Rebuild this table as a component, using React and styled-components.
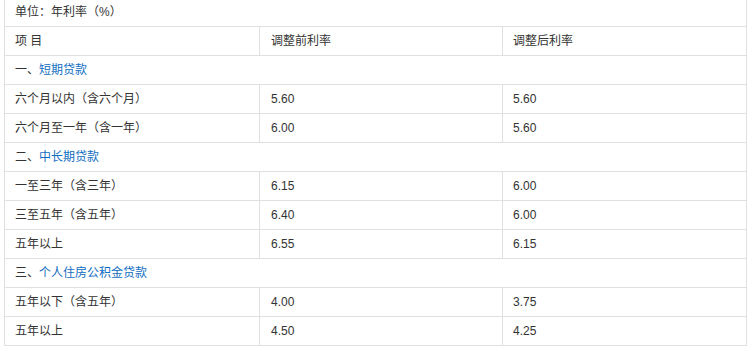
import React from "react";
import styled, { createGlobalStyle } from "styled-components";

const Global = createGlobalStyle`
  html, body { margin: 0; padding: 0; background: #fff; }
  body { font-family: "Liberation Sans", "Noto Sans CJK SC", sans-serif; }
`;

const Page = styled.div`
  padding: 0 9px 0 4px;
  overflow: hidden;
  height: 351px;
`;

const Table = styled.table`
  width: 742px;
  margin-top: -3px;
  border-collapse: collapse;
  table-layout: fixed;
  font-size: 12px;
  color: #333;
`;

const Cell = styled.td`
  border: 1px solid #e0e0e0;
  height: 28px;
  padding: 0 0 0 ${(p) => p.$pad || 10}px;
  vertical-align: middle;
  white-space: nowrap;
  line-height: 16px;
`;

const Link = styled.a`
  color: #136ec2;
  text-decoration: none;
`;

const rows = [
  { section: "一、", name: "短期贷款" },
  ["六个月以内（含六个月）", "5.60", "5.60"],
  ["六个月至一年（含一年）", "6.00", "5.60"],
  { section: "二、", name: "中长期贷款" },
  ["一至三年（含三年）", "6.15", "6.00"],
  ["三至五年（含五年）", "6.40", "6.00"],
  ["五年以上", "6.55", "6.15"],
  { section: "三、", name: "个人住房公积金贷款" },
  ["五年以下（含五年）", "4.00", "3.75"],
  ["五年以上", "4.50", "4.25"],
];

export default function App() {
  return (
    <Page>
      <Global />
      <Table>
        <colgroup>
          <col style={{ width: 255 }} />
          <col style={{ width: 243 }} />
          <col style={{ width: 244 }} />
        </colgroup>
        <tbody>
          <tr>
            <Cell colSpan={3}>单位：年利率（%）</Cell>
          </tr>
          <tr>
            <Cell>项 目</Cell>
            <Cell $pad={11}>调整前利率</Cell>
            <Cell $pad={10}>调整后利率</Cell>
          </tr>
          {rows.map((r, i) =>
            Array.isArray(r) ? (
              <tr key={i}>
                <Cell>{r[0]}</Cell>
                <Cell $pad={11}>{r[1]}</Cell>
                <Cell $pad={10}>{r[2]}</Cell>
              </tr>
            ) : (
              <tr key={i}>
                <Cell colSpan={3}>
                  {r.section}
                  <Link href="#">{r.name}</Link>
                </Cell>
              </tr>
            )
          )}
        </tbody>
      </Table>
    </Page>
  );
}
